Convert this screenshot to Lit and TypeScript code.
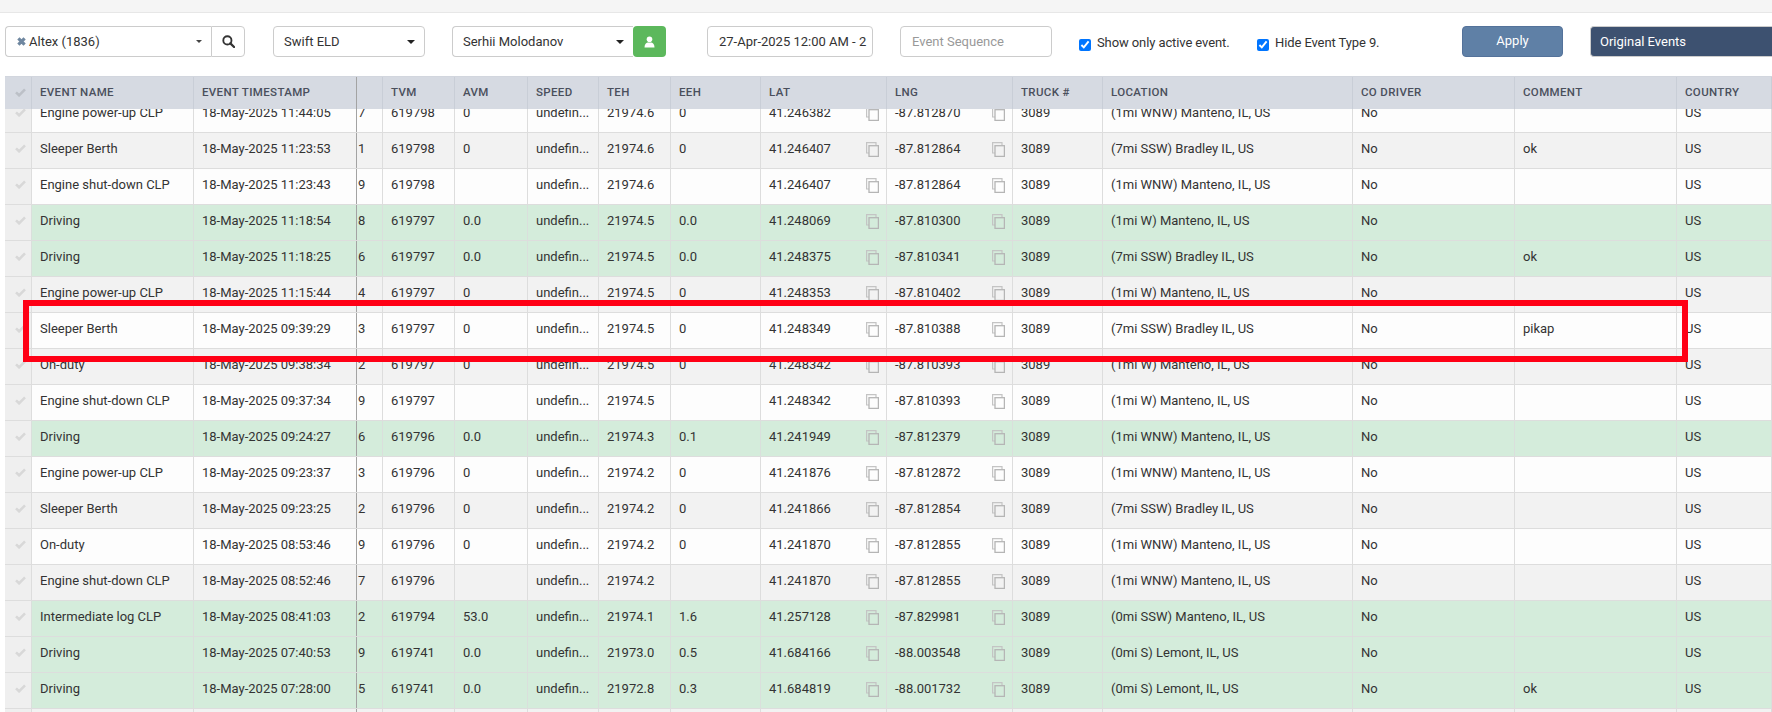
import { LitElement, html, css, svg } from "lit";
import { customElement } from "lit/decorators.js";

type Row = [string, string, string, string, string, string, string, string, string, string, string, string];
const L = {
  wnw: "(1mi WNW) Manteno, IL, US",
  ssw: "(7mi SSW) Bradley IL, US",
  w: "(1mi W) Manteno, IL, US",
  zs: "(0mi SSW) Manteno, IL, US",
  lem: "(0mi S) Lemont, IL, US",
};
const PU = "Engine power-up CLP", SD = "Engine shut-down CLP", SB = "Sleeper Berth", DR = "Driving", OD = "On-duty";
// tone, name, time, seq, tvm, avm, teh, eeh, lat, lng, location, comment
const rows: Row[] = [
  ["w", PU, "18-May-2025 11:44:05", "7", "619798", "0", "21974.6", "0", "41.246382", "-87.812870", L.wnw, ""],
  ["g", SB, "18-May-2025 11:23:53", "1", "619798", "0", "21974.6", "0", "41.246407", "-87.812864", L.ssw, "ok"],
  ["w", SD, "18-May-2025 11:23:43", "9", "619798", "", "21974.6", "", "41.246407", "-87.812864", L.wnw, ""],
  ["d", DR, "18-May-2025 11:18:54", "8", "619797", "0.0", "21974.5", "0.0", "41.248069", "-87.810300", L.w, ""],
  ["d", DR, "18-May-2025 11:18:25", "6", "619797", "0.0", "21974.5", "0.0", "41.248375", "-87.810341", L.ssw, "ok"],
  ["g", PU, "18-May-2025 11:15:44", "4", "619797", "0", "21974.5", "0", "41.248353", "-87.810402", L.w, ""],
  ["w", SB, "18-May-2025 09:39:29", "3", "619797", "0", "21974.5", "0", "41.248349", "-87.810388", L.ssw, "pikap"],
  ["g", OD, "18-May-2025 09:38:34", "2", "619797", "0", "21974.5", "0", "41.248342", "-87.810393", L.w, ""],
  ["w", SD, "18-May-2025 09:37:34", "9", "619797", "", "21974.5", "", "41.248342", "-87.810393", L.w, ""],
  ["d", DR, "18-May-2025 09:24:27", "6", "619796", "0.0", "21974.3", "0.1", "41.241949", "-87.812379", L.wnw, ""],
  ["w", PU, "18-May-2025 09:23:37", "3", "619796", "0", "21974.2", "0", "41.241876", "-87.812872", L.wnw, ""],
  ["g", SB, "18-May-2025 09:23:25", "2", "619796", "0", "21974.2", "0", "41.241866", "-87.812854", L.ssw, ""],
  ["w", OD, "18-May-2025 08:53:46", "9", "619796", "0", "21974.2", "0", "41.241870", "-87.812855", L.wnw, ""],
  ["g", SD, "18-May-2025 08:52:46", "7", "619796", "", "21974.2", "", "41.241870", "-87.812855", L.wnw, ""],
  ["d", "Intermediate log CLP", "18-May-2025 08:41:03", "2", "619794", "53.0", "21974.1", "1.6", "41.257128", "-87.829981", L.zs, ""],
  ["d", DR, "18-May-2025 07:40:53", "9", "619741", "0.0", "21973.0", "0.5", "41.684166", "-88.003548", L.lem, ""],
  ["d", DR, "18-May-2025 07:28:00", "5", "619741", "0.0", "21972.8", "0.3", "41.684819", "-88.001732", L.lem, "ok"],
  ["g", "", "", "", "", "", "", "", "", "", "", ""],
];

const check = svg`<svg class="check" viewBox="0 0 11 9"><path d="M1 4.4 L4.1 7.3 L10 1.3" fill="none" stroke="currentColor" stroke-width="2.6"/></svg>`;
const copy = svg`<svg class="copy" viewBox="0 0 13 15"><path d="M10 3V.6H.6V11H3" fill="none" stroke="#c4c4c4" stroke-width="1.2"/><rect x="3" y="3.7" width="9.4" height="10.7" fill="none" stroke="currentColor" stroke-width="1.3"/></svg>`;

@customElement("app-root")
export class AppRoot extends LitElement {
  static styles = css`
    :host { display: block; height: 712px; overflow: hidden; position: relative; background: #fff;
      font-family: Roboto, "Liberation Sans", sans-serif; font-size: 13px; color: #333; }
    .topband { height: 12px; background: #f5f5f5; border-bottom: 1px solid #e7e7e7; }
    .toolbar { height: 63px; display: flex; align-items: flex-start; padding: 13px 0 0 5px; box-sizing: border-box; }
    .ctl { height: 31px; box-sizing: border-box; border: 1px solid #ccc; border-radius: 4px; background: #fff;
      display: flex; align-items: center; flex: none; font-size: 13px; color: #333; }
    .caret { width: 0; height: 0; border-left: 4px solid transparent; border-right: 4px solid transparent; border-top: 4px solid #222; margin-left: auto; }
    .group { display: flex; flex: none; }
    .altex { width: 206px; border-radius: 4px 0 0 4px; border-right: 0; padding: 0 9px 0 11px; }
    .altex .caret { border-left-width: 3px; border-right-width: 3px; border-top-width: 3px; border-top-color: #444; }
    .x { width: 9px; height: 9px; margin-right: 3px; color: #6f87a0; flex: none; }
    .searchbtn { width: 34px; border-radius: 0 4px 4px 0; justify-content: center; color: #333; }
    .searchbtn svg { width: 13px; height: 13px; }
    .swift { width: 152px; margin-left: 28px; padding: 0 9px 0 10px; }
    .serhii { width: 181px; border-radius: 4px 0 0 4px; padding: 0 9px 0 10px; margin-left: 27px; border-right: 0; }
    .user { width: 33px; height: 31px; background: #5cb85c; border-radius: 4px; display: flex; align-items: center; justify-content: center; flex: none; }
    .user svg { width: 11px; height: 12px; }
    .date { width: 166px; margin-left: 41px; padding: 0 8px 0 11px; white-space: nowrap; }
    .seq { width: 152px; margin-left: 27px; padding: 0 11px; color: #999; }
    .chk { display: flex; align-items: center; height: 31px; flex: none; padding-top: 2px; box-sizing: border-box; font-size: 13px; letter-spacing: -0.1px; color: #333; white-space: nowrap; }
    .chk input { width: 12px; height: 12px; margin: 5px 6px 0 0; accent-color: #0075ff; flex: none; }
    .c1 { margin-left: 27px; width: 178px; }
    .c2 { width: 205px; }
    .apply { width: 101px; height: 31px; flex: none; box-sizing: border-box; background: #5f80a6; color: #fff; border: 1px solid #54729a; border-radius: 4px;
      display: flex; align-items: center; justify-content: center; font-size: 13px; padding-bottom: 2px; }
    .orig { width: 182px; height: 31px; margin-left: 27px; flex: none; box-sizing: border-box; background: #3d5170; color: #fff; border: 1px solid #ccc; border-right: 0; border-radius: 4px 0 0 4px;
      display: flex; align-items: center; padding-left: 9px; font-size: 13px; }

    .tablewrap { margin-left: 5px; height: 636px; overflow: hidden; position: relative; }
    .grid { display: grid; grid-template-columns: 27px 162px 162px 27px 72px 73px 71px 72px 90px 126px 126px 90px 250px 162px 162px 95px; }
    .head { height: 33px; background: #d6dae2; border-top: 1px solid #d2d6de; box-sizing: border-box; position: relative; z-index: 2; }
    .th { display: flex; align-items: center; padding: 0 0 2px 8px; box-sizing: border-box; border-right: 1px solid #c9ced7;
      font-size: 11.5px; font-weight: 500; letter-spacing: 0.35px; color: #4a4f5c; white-space: nowrap; overflow: hidden; }
    .body { margin-top: -12px; }
    .row { height: 36px; box-sizing: border-box; border-bottom: 1px solid #ddd; }
    .row.w { background: #fdfdfd; }
    .row.g { background: #f2f2f2; }
    .row.d { background: #d4ecdb; }
    .td { display: flex; align-items: center; padding: 0 0 5px 8px; box-sizing: border-box; border-right: 1px solid #ddd; white-space: nowrap; overflow: hidden; color: #333; position: relative; }
    .row.d .td { border-right-color: #dadfdc; }
    .td.sel, .th.sel { justify-content: center; padding: 0 0 5px 5px; color: #d8d8d8; }
    .td.sel { background: #efefef; }
    .th.sel { color: #bcc0c7; padding-bottom: 2px; }
    .check { width: 11px; height: 9px; }
    .td.frozen, .th.frozen { border-right: 0; }
    .td.seqn, .th.seqn { border-left: 1px solid #a3a3a3; padding-left: 1px; }
    .copy { position: absolute; right: 7px; top: 9px; width: 13px; height: 15px; color: #b5b5b5; }
    .ell { overflow: hidden; text-overflow: ellipsis; display: block; padding-right: 4px; }
    .redbox { position: absolute; left: 23px; top: 300px; width: 1665px; height: 62px; box-sizing: border-box; border: 6px solid #ff0015; z-index: 5; pointer-events: none; }
  `;

  render() {
    const heads = ["", "EVENT NAME", "EVENT TIMESTAMP", "", "TVM", "AVM", "SPEED", "TEH", "EEH", "LAT", "LNG", "TRUCK #", "LOCATION", "CO DRIVER", "COMMENT", "COUNTRY"];
    return html`
      <div class="topband"></div>
      <div class="toolbar">
        <div class="group">
          <div class="ctl altex"><svg class="x" viewBox="0 0 9 9"><path d="M1.4 1.4l6.2 6.2M7.6 1.4L1.4 7.6" stroke="currentColor" stroke-width="3.2"/></svg>Altex (1836)<span class="caret"></span></div>
          <div class="ctl searchbtn"><svg viewBox="0 0 14 14"><circle cx="5.8" cy="5.8" r="4.4" fill="none" stroke="currentColor" stroke-width="2"/><path d="M9 9l4 4" stroke="currentColor" stroke-width="2.4" stroke-linecap="round"/></svg></div>
        </div>
        <div class="ctl swift">Swift ELD<span class="caret"></span></div>
        <div class="group">
          <div class="ctl serhii">Serhii Molodanov<span class="caret"></span></div>
          <div class="user"><svg viewBox="0 0 11 12"><circle cx="5.5" cy="3.2" r="2.8" fill="#fff"/><path d="M.5 11.5C.5 8 2 6.8 3.6 6.4h3.8C9 6.8 10.5 8 10.5 11.5z" fill="#fff"/></svg></div>
        </div>
        <div class="ctl date"><span>27-Apr-2025 12:00 AM - 2</span></div>
        <div class="ctl seq">Event Sequence</div>
        <label class="chk c1"><input type="checkbox" checked />Show only active event.</label>
        <label class="chk c2"><input type="checkbox" checked />Hide Event Type 9.</label>
        <div class="apply">Apply</div>
        <div class="orig">Original Events</div>
      </div>
      <div class="tablewrap">
        <div class="grid head">
          ${heads.map((h, i) => html`<div class="th ${i === 0 ? "sel" : ""} ${i === 2 ? "frozen" : ""} ${i === 3 ? "seqn" : ""}">${i === 0 ? check : h}</div>`)}
        </div>
        <div class="body">
          ${rows.map((r) => {
            const [tone, name, time, seq, tvm, avm, teh, eeh, lat, lng, loc, comment] = r;
            const blank = name === "";
            return html`<div class="grid row ${tone}">
              <div class="td sel">${blank ? "" : check}</div>
              <div class="td">${name}</div>
              <div class="td frozen">${time}</div>
              <div class="td seqn">${seq}</div>
              <div class="td">${tvm}</div>
              <div class="td">${avm}</div>
              <div class="td"><span class="ell">${blank ? "" : "undefin..."}</span></div>
              <div class="td">${teh}</div>
              <div class="td">${eeh}</div>
              <div class="td">${lat}${blank ? "" : copy}</div>
              <div class="td">${lng}${blank ? "" : copy}</div>
              <div class="td">${blank ? "" : "3089"}</div>
              <div class="td">${loc}</div>
              <div class="td">${blank ? "" : "No"}</div>
              <div class="td">${comment}</div>
              <div class="td">${blank ? "" : "US"}</div>
            </div>`;
          })}
        </div>
      </div>
      <div class="redbox"></div>
    `;
  }
}
